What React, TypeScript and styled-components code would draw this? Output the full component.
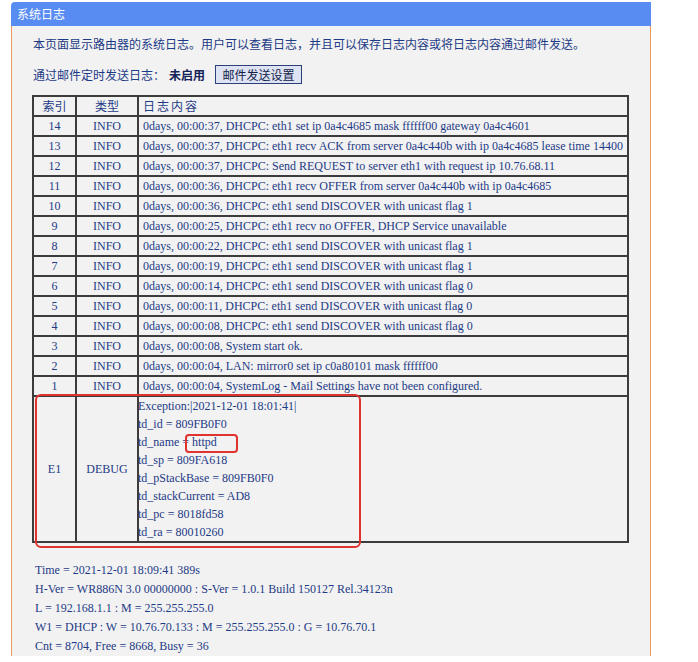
import React from "react";
import styled, { createGlobalStyle } from "styled-components";

const Global = createGlobalStyle`
  html, body { margin: 0; padding: 0; background: #ffffff; }
  body { font-family: "Noto Sans CJK SC", "Noto Sans", sans-serif; }
`;

const Panel = styled.div`
  margin: 2px 0 0 11px;
  width: 640px;
`;

const Header = styled.div`
  height: 24px;
  background: #588cf2;
  border-top-left-radius: 4px;
  color: #ffffff;
  font-size: 12px;
  line-height: 24px;
  padding-left: 6px;
  font-family: "Noto Sans CJK SC", sans-serif;
`;

const Body = styled.div`
  background: #f2f2f2;
  border-left: 1px solid #ee9a5c;
  border-right: 1px solid #ee9a5c;
  padding: 8px 0 0 21px;
  min-height: 628px;
  box-sizing: border-box;
`;

const Intro = styled.p`
  margin: 0;
  font-size: 12px;
  line-height: 20px;
  color: #1d3a86;
  font-family: "Noto Sans CJK SC", sans-serif;
`;

const MailRow = styled.div`
  display: flex;
  align-items: center;
  margin-top: 10px;
  height: 20px;
  font-size: 12px;
  color: #1d3a86;
  font-family: "Noto Sans CJK SC", sans-serif;
`;

const Status = styled.b`
  margin-left: 4px;
  font-weight: bold;
  color: #14235a;
`;

const MailButton = styled.button`
  margin-left: 10px;
  height: 19px;
  width: 87px;
  padding: 0;
  border: 1px solid #2c3f78;
  background: #dde3f2;
  color: #14214a;
  font-size: 12px;
  font-family: "Noto Sans CJK SC", sans-serif;
  line-height: 17px;
`;

const TableWrap = styled.div`
  position: relative;
  margin: 11px 0 0 -1px;
  width: 597px;
`;

const LogTable = styled.table`
  width: 597px;
  border-collapse: separate;
  border-spacing: 0;
  border: 1px solid #3c3c3c;
  table-layout: fixed;
  font-family: "Liberation Serif", "Times New Roman", serif;
  font-size: 12px;
  color: #1d3a86;
`;

const Th = styled.th<{ $left?: boolean }>`
  border: 1px solid #3c3c3c;
  padding: 0 4px;
  height: 18px;
  line-height: 18px;
  font-weight: normal;
  text-align: ${(p) => (p.$left ? "left" : "center")};
  font-family: "Noto Sans CJK SC", sans-serif;
  letter-spacing: ${(p) => (p.$left ? "2px" : "0")};
`;

const Td = styled.td<{ $left?: boolean }>`
  border: 1px solid #3c3c3c;
  padding: 0 ${(p) => (p.$left ? "4px" : "2px")};
  height: 18px;
  line-height: 18px;
  white-space: nowrap;
  overflow: hidden;
  text-align: ${(p) => (p.$left ? "left" : "center")};
`;

const DebugLines = styled.div`
  display: flex;
  flex-direction: column;
  line-height: 18px;
  margin-left: -5px;
`;

const Marked = styled.span`
  position: relative;
  &::after {
    content: "";
    position: absolute;
    left: -7px;
    top: -1px;
    width: 49px;
    height: 15px;
    border: 2px solid #e0322f;
    border-radius: 4px;
  }
`;

const RedFrame = styled.div`
  position: absolute;
  left: 3px;
  top: 299px;
  width: 322px;
  height: 150px;
  border: 2px solid #e0322f;
  border-radius: 6px;
  pointer-events: none;
`;

const Footer = styled.div`
  margin: 18px 0 0 2px;
  font-family: "Liberation Serif", "Times New Roman", serif;
  font-size: 12px;
  line-height: 19px;
  color: #1d3a86;
`;

const rows: [string, string][] = [
  ["14", "0days, 00:00:37, DHCPC: eth1 set ip 0a4c4685 mask ffffff00 gateway 0a4c4601"],
  ["13", "0days, 00:00:37, DHCPC: eth1 recv ACK from server 0a4c440b with ip 0a4c4685 lease time 14400"],
  ["12", "0days, 00:00:37, DHCPC: Send REQUEST to server eth1 with request ip 10.76.68.11"],
  ["11", "0days, 00:00:36, DHCPC: eth1 recv OFFER from server 0a4c440b with ip 0a4c4685"],
  ["10", "0days, 00:00:36, DHCPC: eth1 send DISCOVER with unicast flag 1"],
  ["9", "0days, 00:00:25, DHCPC: eth1 recv no OFFER, DHCP Service unavailable"],
  ["8", "0days, 00:00:22, DHCPC: eth1 send DISCOVER with unicast flag 1"],
  ["7", "0days, 00:00:19, DHCPC: eth1 send DISCOVER with unicast flag 1"],
  ["6", "0days, 00:00:14, DHCPC: eth1 send DISCOVER with unicast flag 0"],
  ["5", "0days, 00:00:11, DHCPC: eth1 send DISCOVER with unicast flag 0"],
  ["4", "0days, 00:00:08, DHCPC: eth1 send DISCOVER with unicast flag 0"],
  ["3", "0days, 00:00:08, System start ok."],
  ["2", "0days, 00:00:04, LAN: mirror0 set ip c0a80101 mask ffffff00"],
  ["1", "0days, 00:00:04, SystemLog - Mail Settings have not been configured."],
];

const footerLines = [
  "Time = 2021-12-01 18:09:41 389s",
  "H-Ver = WR886N 3.0 00000000 : S-Ver = 1.0.1 Build 150127 Rel.34123n",
  "L = 192.168.1.1 : M = 255.255.255.0",
  "W1 = DHCP : W = 10.76.70.133 : M = 255.255.255.0 : G = 10.76.70.1",
  "Cnt = 8704, Free = 8668, Busy = 36",
];

export default function App() {
  return (
    <>
      <Global />
      <Panel>
        <Header>系统日志</Header>
        <Body>
          <Intro>本页面显示路由器的系统日志。用户可以查看日志，并且可以保存日志内容或将日志内容通过邮件发送。</Intro>
          <MailRow>
            通过邮件定时发送日志：<Status>未启用</Status>
            <MailButton>邮件发送设置</MailButton>
          </MailRow>
          <TableWrap>
            <LogTable>
              <colgroup>
                <col style={{ width: 43 }} />
                <col style={{ width: 62 }} />
                <col />
              </colgroup>
              <thead>
                <tr>
                  <Th>索引</Th>
                  <Th>类型</Th>
                  <Th $left>日志内容</Th>
                </tr>
              </thead>
              <tbody>
                {rows.map(([idx, msg]) => (
                  <tr key={idx}>
                    <Td>{idx}</Td>
                    <Td>INFO</Td>
                    <Td $left>{msg}</Td>
                  </tr>
                ))}
                <tr>
                  <Td>E1</Td>
                  <Td>DEBUG</Td>
                  <Td $left>
                    <DebugLines>
                      <span>Exception:|2021-12-01 18:01:41|</span>
                      <span>td_id = 809FB0F0</span>
                      <span>
                        td_name = <Marked>httpd</Marked>
                      </span>
                      <span>td_sp = 809FA618</span>
                      <span>td_pStackBase = 809FB0F0</span>
                      <span>td_stackCurrent = AD8</span>
                      <span>td_pc = 8018fd58</span>
                      <span>td_ra = 80010260</span>
                    </DebugLines>
                  </Td>
                </tr>
              </tbody>
            </LogTable>
            <RedFrame />
          </TableWrap>
          <Footer>
            {footerLines.map((l) => (
              <div key={l}>{l}</div>
            ))}
          </Footer>
        </Body>
      </Panel>
    </>
  );
}
